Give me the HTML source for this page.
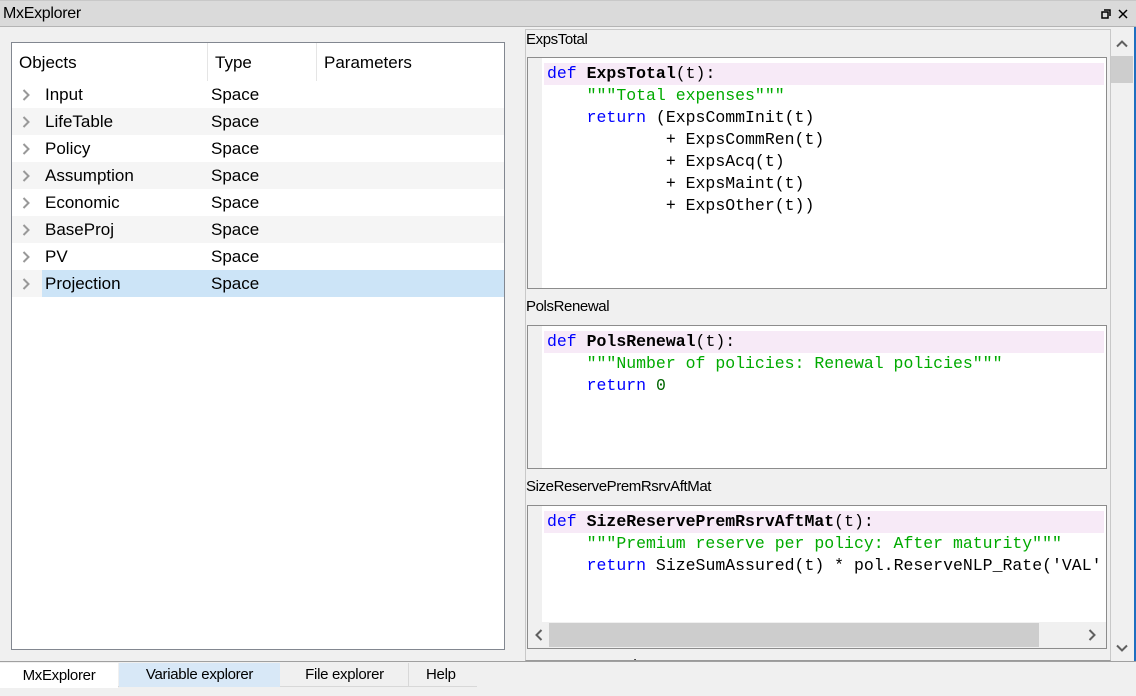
<!DOCTYPE html>
<html><head><meta charset="utf-8"><style>
*{margin:0;padding:0;box-sizing:border-box}
body{width:1136px;height:696px;background:#f0f0f0;font-family:"Liberation Sans",sans-serif;position:relative;overflow:hidden}
.abs{position:absolute}
.title{left:0;top:0;width:1136px;height:27px;background:#dadada;border-bottom:1px solid #b4b4b4;border-top:1px solid #c8c8c8;font-size:16px;line-height:26px;padding-left:3px;color:#000;letter-spacing:-0.3px}
.tree{left:11px;top:42px;width:494px;height:608px;background:#fff;border:1px solid #828790}
.hdr{position:absolute;top:0;height:38px;font-size:17px;line-height:40px;padding-left:7px;border-right:1px solid #e5e5e5}
.row{position:absolute;left:0;width:492px;height:27px;font-size:17px;line-height:27px}
.row span{position:absolute}
.chev{position:absolute;left:10px;top:8px}
.code{font-family:"Liberation Mono",monospace;font-size:16.5px;line-height:22px;white-space:pre}
.lbl{font-size:15px;letter-spacing:-0.4px;color:#000}
.box{background:#fff;border:1px solid #8c8c8c}
.gut{position:absolute;left:0;top:0;width:14px;bottom:0;background:#f0f0f0}
.kw{color:#0000ff}.st{color:#00aa00}.b{font-weight:bold}.n{color:#006600}
.hl{position:absolute;left:16px;right:2px;height:22px;background:#f7eaf7}
</style></head><body>
<div class="abs title">MxExplorer</div>
<svg class="abs" style="left:1101px;top:9px" width="10" height="10"><path d="M3 1h6v6M1 3h6v6H1z" fill="none" stroke="#000" stroke-width="1.5"/></svg>
<svg class="abs" style="left:1118px;top:9px" width="10" height="10"><path d="M1 1l8 8M9 1l-8 8" stroke="#000" stroke-width="1.5"/></svg>

<div class="abs tree">
 <div class="hdr" style="left:0;width:196px">Objects</div>
 <div class="hdr" style="left:196px;width:109px">Type</div>
 <div class="hdr" style="left:305px;width:187px;border-right:none">Parameters</div>
 <div class="row" style="top:38px"><svg class="chev" width="8" height="12"><path d="M1.5 1l5 5-5 5" fill="none" stroke="#999" stroke-width="2"/></svg><span style="left:33px">Input</span><span style="left:199px">Space</span></div>
 <div class="row" style="top:65px;background:#f5f5f5"><svg class="chev" width="8" height="12"><path d="M1.5 1l5 5-5 5" fill="none" stroke="#999" stroke-width="2"/></svg><span style="left:33px">LifeTable</span><span style="left:199px">Space</span></div>
 <div class="row" style="top:92px"><svg class="chev" width="8" height="12"><path d="M1.5 1l5 5-5 5" fill="none" stroke="#999" stroke-width="2"/></svg><span style="left:33px">Policy</span><span style="left:199px">Space</span></div>
 <div class="row" style="top:119px;background:#f5f5f5"><svg class="chev" width="8" height="12"><path d="M1.5 1l5 5-5 5" fill="none" stroke="#999" stroke-width="2"/></svg><span style="left:33px">Assumption</span><span style="left:199px">Space</span></div>
 <div class="row" style="top:146px"><svg class="chev" width="8" height="12"><path d="M1.5 1l5 5-5 5" fill="none" stroke="#999" stroke-width="2"/></svg><span style="left:33px">Economic</span><span style="left:199px">Space</span></div>
 <div class="row" style="top:173px;background:#f5f5f5"><svg class="chev" width="8" height="12"><path d="M1.5 1l5 5-5 5" fill="none" stroke="#999" stroke-width="2"/></svg><span style="left:33px">BaseProj</span><span style="left:199px">Space</span></div>
 <div class="row" style="top:200px"><svg class="chev" width="8" height="12"><path d="M1.5 1l5 5-5 5" fill="none" stroke="#999" stroke-width="2"/></svg><span style="left:33px">PV</span><span style="left:199px">Space</span></div>
 <div class="row" style="top:227px;background:#f5f5f5"><svg class="chev" width="8" height="12"><path d="M1.5 1l5 5-5 5" fill="none" stroke="#999" stroke-width="2"/></svg><div style="position:absolute;left:30px;right:0;top:0;bottom:0;background:#cce4f7"></div><span style="left:33px">Projection</span><span style="left:199px">Space</span></div>
</div>

<div class="abs" style="left:525px;top:29px;width:586px;height:632px;border:1px solid #c8c8c8;border-bottom:1px solid #9a9a9a;overflow:hidden">
 <div class="abs lbl" style="left:0;top:1px">ExpsTotal</div>
 <div class="abs box" style="left:1px;top:27px;width:580px;height:232px"><div class="gut"></div><div class="hl" style="top:5px"></div>
 <div class="abs code" style="left:19px;top:5px"><span class="kw">def</span> <span class="b">ExpsTotal</span>(t):
    <span class="st">"""Total expenses"""</span>
    <span class="kw">return</span> (ExpsCommInit(t)
            + ExpsCommRen(t)
            + ExpsAcq(t)
            + ExpsMaint(t)
            + ExpsOther(t))</div></div>
 <div class="abs lbl" style="left:0;top:268px">PolsRenewal</div>
 <div class="abs box" style="left:1px;top:295px;width:580px;height:144px"><div class="gut"></div><div class="hl" style="top:5px"></div>
 <div class="abs code" style="left:19px;top:5px"><span class="kw">def</span> <span class="b">PolsRenewal</span>(t):
    <span class="st">"""Number of policies: Renewal policies"""</span>
    <span class="kw">return</span> <span class="n">0</span></div></div>
 <div class="abs lbl" style="left:0;top:448px">SizeReservePremRsrvAftMat</div>
 <div class="abs box" style="left:1px;top:475px;width:580px;height:144px;overflow:hidden"><div class="gut"></div><div class="hl" style="top:5px"></div>
 <div class="abs code" style="left:19px;top:5px"><span class="kw">def</span> <span class="b">SizeReservePremRsrvAftMat</span>(t):
    <span class="st">"""Premium reserve per policy: After maturity"""</span>
    <span class="kw">return</span> SizeSumAssured(t) * pol.ReserveNLP_Rate('VAL'</div>
 <div class="abs" style="left:0;top:116px;width:578px;height:26px;background:#f0f0f0"></div>
 <div class="abs" style="left:21px;top:117px;width:490px;height:24px;background:#cdcdcd"></div>
 <svg class="abs" style="left:7px;top:123px" width="8" height="12"><path d="M6.5 1l-5 5 5 5" fill="none" stroke="#606060" stroke-width="2"/></svg>
 <svg class="abs" style="left:560px;top:123px" width="8" height="12"><path d="M1.5 1l5 5-5 5" fill="none" stroke="#606060" stroke-width="2"/></svg>
 </div>
 <div class="abs lbl" style="left:0;top:627px">PremsRenPerPol</div>
</div>
<div class="abs" style="left:1111px;top:29px;width:22px;height:632px;background:#f0f0f0"></div>
<div class="abs" style="left:1111px;top:56px;width:22px;height:27px;background:#cdcdcd"></div>
<svg class="abs" style="left:1116px;top:40px" width="12" height="8"><path d="M1 6.5l5-5 5 5" fill="none" stroke="#606060" stroke-width="2"/></svg>
<svg class="abs" style="left:1116px;top:644px" width="12" height="8"><path d="M1 1.5l5 5 5-5" fill="none" stroke="#606060" stroke-width="2"/></svg>
<div class="abs" style="left:1134px;top:27px;width:2px;height:635px;background:#1e6fc0"></div>
<div class="abs" style="left:0;top:661px;width:1136px;height:1px;background:#a0a0a0"></div>

<div class="abs" style="left:0;top:663px;width:477px;height:24px;border-bottom:1px solid #d8d8d8"></div>
<div class="abs" style="left:0;top:663px;width:118px;height:25px;background:#fff;font-size:15px;line-height:26px;text-align:center;letter-spacing:-0.3px">MxExplorer</div>
<div class="abs" style="left:119px;top:663px;width:161px;height:24px;background:#d8e8f7;font-size:15px;line-height:24px;text-align:center;letter-spacing:-0.3px">Variable explorer</div>
<div class="abs" style="left:281px;top:663px;width:128px;height:24px;border-right:1px solid #d8d8d8;font-size:15px;line-height:24px;text-align:center;letter-spacing:-0.3px">File explorer</div>
<div class="abs" style="left:410px;top:663px;width:67px;height:24px;font-size:15px;line-height:24px;padding-left:16px;letter-spacing:-0.3px">Help</div>
</body></html>
